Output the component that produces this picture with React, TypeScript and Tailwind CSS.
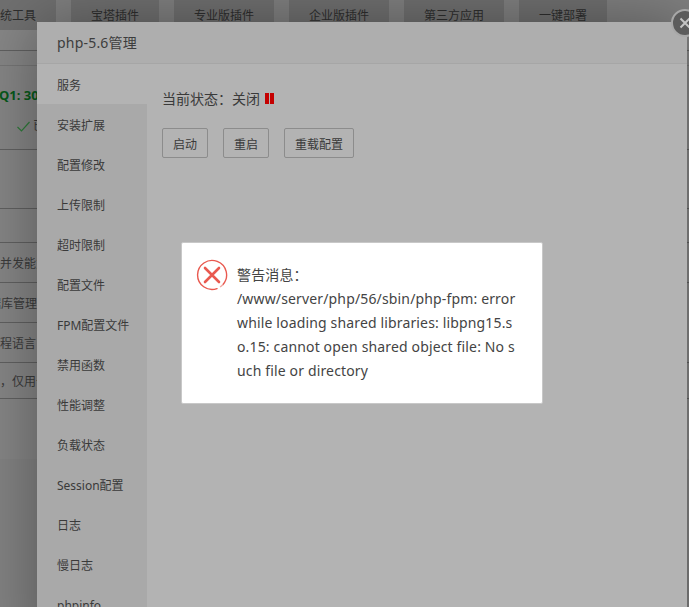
const font = { fontFamily: '"Noto Sans", "Noto Sans CJK SC", sans-serif' };

const tabs: [string, string][] = [
  ['系统工具', 'w-[88px] -ml-[32px]'],
  ['宝塔插件', 'w-[88px]'],
  ['专业版插件', 'w-[100px]'],
  ['企业版插件', 'w-[100px]'],
  ['第三方应用', 'w-[100px]'],
  ['一键部署', 'w-[88px]'],
];

const menu = ['服务', '安装扩展', '配置修改', '上传限制', '超时限制', '配置文件', 'FPM配置文件', '禁用函数', '性能调整', '负载状态', 'Session配置', '日志', '慢日志', 'phpinfo'];

function Background() {
  return (
    <div className="h-[607px] w-[689px] bg-[#858585]">
      <div className="flex h-[30px] gap-[15px] bg-[#808080]">
        {tabs.map(([t, c]) => (
          <div key={t} className={`flex h-[30px] shrink-0 items-center justify-center bg-[#707070] pt-[2px] text-[12px] text-[#2e2e2e] ${c}`}>{t}</div>
        ))}
      </div>
      <div className="h-[21px] border-b border-[#606060] bg-[#868686]" />
      <div className="h-[15px] border-b border-[#757575]" />
      <div className="h-[84px] border-b border-[#606060] whitespace-nowrap">
        <div className="-ml-[1px] pt-[20px] text-[13px] leading-[18px] font-bold text-[#07591a]">Q1: 30</div>
        <div className="flex items-center pt-[13px] pl-[16px] text-[12px] text-[#3a3a3a]">
          <svg width="15" height="15" viewBox="0 0 15 15" fill="none" stroke="#2f7a3a" strokeWidth="1.2"><path d="M1.5 8 L5.5 12 L13.5 3" /></svg>
          <span className="ml-[2px]">已</span>
        </div>
      </div>
      <div className="h-[59px] border-b border-[#606060]" />
      <div className="h-[34px] border-b border-[#606060]" />
      <div className="flex h-[40px] items-center border-b border-[#606060] pt-[2px] text-[12px] whitespace-nowrap text-[#3a3a3a]">并发能力</div>
      <div className="flex h-[40px] w-[37px] items-center justify-end border-b border-[#606060] pt-[2px] text-[12px] whitespace-nowrap text-[#3a3a3a]">数据库管理</div>
      <div className="flex h-[40px] items-center border-b border-[#606060] pt-[2px] text-[12px] whitespace-nowrap text-[#3a3a3a]">程语言</div>
      <div className="flex h-[36px] items-center border-b border-[#606060] pt-[2px] text-[12px] whitespace-nowrap text-[#3a3a3a]">，仅用于</div>
      <div className="h-[60px]" />
      <div className="h-[148px] bg-[#828282]" />
    </div>
  );
}

function Modal() {
  return (
    <div className="absolute top-[22px] left-[37px] h-[640px] w-[650px] bg-[#b3b3b3] shadow-[0_0_60px_rgba(0,0,0,0.35)]">
      <div className="flex h-[42px] items-center border-b border-[#a6a6a6] bg-[#aeaeae] pl-[20px] text-[14px] tracking-[0.2px] text-[#3d3d3d]">php-5.6管理</div>
      <div className="flex">
        <div className="w-[110px] bg-[#a9a9a9]">
          {menu.map((m, i) => (
            <div key={m} className={`flex h-[40px] items-center pt-[3px] pl-[20px] text-[12px] text-[#3a3a3a] ${i === 0 ? 'bg-[#b3b3b3]' : ''}`}>{m}</div>
          ))}
        </div>
        <div className="flex flex-col pt-[24px] pl-[15px]">
          <div className="flex h-[20px] items-center text-[14px] text-[#3a3a3a]">
            <span>当前状态：关闭</span>
            <span className="ml-[5px] flex gap-[1px]">
              <span className="h-[11px] w-[4px] bg-[#c40000]" />
              <span className="h-[11px] w-[4px] bg-[#c40000]" />
            </span>
          </div>
          <div className="mt-[20px] flex gap-[15px]">
            {[['启动', 'w-[46px]'], ['重启', 'w-[46px]'], ['重载配置', 'w-[70px]']].map(([b, w]) => (
              <div key={b} className={`flex h-[30px] items-center justify-center rounded-[2px] border border-[#8c8c8c] pt-[3px] text-[12px] text-[#3a3a3a] ${w}`}>{b}</div>
            ))}
          </div>
        </div>
      </div>
    </div>
  );
}

function CloseButton() {
  return (
    <div className="absolute top-[9px] left-[671px] flex h-[28px] w-[28px] items-center justify-center rounded-full border-[2px] border-[#a8a8a8] bg-[#5c5c5c]">
      <svg width="12" height="12" viewBox="0 0 12 12" stroke="#c4c4c4" strokeWidth="2"><path d="M1.5 1.5 L10.5 10.5 M10.5 1.5 L1.5 10.5" /></svg>
    </div>
  );
}

function Alert() {
  return (
    <div className="absolute top-[242px] left-[181px] flex h-[162px] w-[362px] rounded-[2px] border border-[#c8c8c8] bg-white pt-[15px] pl-[14px]">
      <svg width="32" height="32" viewBox="0 0 32 32" fill="none" className="mt-[1px] shrink-0">
        <path d="M27 25.5 A14.5 14.5 0 1 0 21 29.6" stroke="#e9594f" strokeWidth="1.4" strokeLinecap="round" />
        <path d="M24 28 A14.5 14.5 0 0 0 27 25.5" stroke="#f1a9a3" strokeWidth="1.2" />
        <path d="M9 9 L23 23 M23 9 L9 23" stroke="#e9594f" strokeWidth="2.6" strokeLinecap="round" />
      </svg>
      <div className="ml-[9px] w-[285px] text-[14px] leading-[24px] tracking-[0.15px] break-all text-[#444]">
        <div className="mt-[5px]">警告消息：</div>
        <div>/www/server/php/56/sbin/php-fpm: error</div>
        <div>while loading shared libraries: libpng15.s</div>
        <div>o.15: cannot open shared object file: No s</div>
        <div>uch file or directory</div>
      </div>
    </div>
  );
}

export default function App() {
  return (
    <div className="relative h-[607px] w-[689px] overflow-hidden" style={font}>
      <Background />
      <Modal />
      <CloseButton />
      <Alert />
    </div>
  );
}
